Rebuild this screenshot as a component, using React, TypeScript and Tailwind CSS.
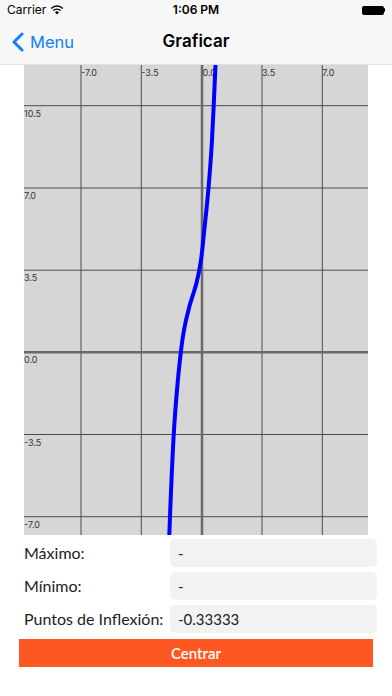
import React from 'react'

const W = 344
const H = 470
const OX = 24
const OY = 65

// grid positions in page pixels
const VLINES = [
  { x: 81, label: '-7.0' },
  { x: 141.3, label: '-3.5' },
  { x: 262, label: '3.5' },
  { x: 322.3, label: '7.0' },
]
const HLINES = [
  { y: 105.7, label: '10.5' },
  { y: 188, label: '7.0' },
  { y: 270.2, label: '3.5' },
  { y: 434.5, label: '-3.5' },
  { y: 516.7, label: '-7.0' },
]
const AXIS_X = 202
const AXIS_Y = 352.3

// sampled curve points (page pixels)
const CURVE: [number, number][] = [
  [217, 30], [215.5, 65], [212, 140], [208.5, 188], [204.5, 228], [201, 260],
  [196.5, 283], [189.5, 306], [184, 330], [180.5, 355], [177, 390], [174, 430],
  [171.5, 480], [169.3, 535], [168.5, 570],
]

function smoothPath(pts: [number, number][]) {
  const p = pts.map(([x, y]) => [x - OX, y - OY])
  let d = `M${p[0][0]},${p[0][1]}`
  for (let i = 0; i < p.length - 1; i++) {
    const p0 = p[i - 1] || p[i]
    const p1 = p[i]
    const p2 = p[i + 1]
    const p3 = p[i + 2] || p2
    const c1x = p1[0] + (p2[0] - p0[0]) / 6
    const c1y = p1[1] + (p2[1] - p0[1]) / 6
    const c2x = p2[0] - (p3[0] - p1[0]) / 6
    const c2y = p2[1] - (p3[1] - p1[1]) / 6
    d += ` C${c1x},${c1y} ${c2x},${c2y} ${p2[0]},${p2[1]}`
  }
  return d
}

function Graph() {
  return (
    <div className="ml-[24px] w-[344px] h-[470px] bg-[#d6d6d6] overflow-hidden">
      <svg width={W} height={H} viewBox={`0 0 ${W} ${H}`} className="block">
        {VLINES.map(v => (
          <line key={v.label} x1={v.x - OX} y1={0} x2={v.x - OX} y2={H} stroke="#4d4d4d" strokeWidth={1} />
        ))}
        {HLINES.map(h => (
          <line key={h.label} x1={0} y1={h.y - OY} x2={W} y2={h.y - OY} stroke="#4d4d4d" strokeWidth={1} />
        ))}
        <line x1={AXIS_X - OX} y1={0} x2={AXIS_X - OX} y2={H} stroke="#6a6a6a" strokeWidth={2.5} />
        <line x1={0} y1={AXIS_Y - OY} x2={W} y2={AXIS_Y - OY} stroke="#6a6a6a" strokeWidth={2.5} />

        <g fontFamily="Inter, 'Liberation Sans', sans-serif" fontSize={9} fill="#333">
          {VLINES.slice(0, 2).map(v => (
            <text key={v.label} x={v.x - OX} y={11}>{v.label}</text>
          ))}
          <text x={AXIS_X - OX + 0.5} y={11}>0.0</text>
          {VLINES.slice(2).map(v => (
            <text key={v.label} x={v.x - OX} y={11}>{v.label}</text>
          ))}
          {HLINES.slice(0, 3).map(h => (
            <text key={h.label} x={0} y={h.y - OY + 11}>{h.label}</text>
          ))}
          <text x={0} y={AXIS_Y - OY + 11}>0.0</text>
          {HLINES.slice(3).map(h => (
            <text key={h.label} x={0} y={h.y - OY + 11}>{h.label}</text>
          ))}
        </g>

        <path d={smoothPath(CURVE)} fill="none" stroke="#0000ff" strokeWidth={4} strokeLinecap="round" />
      </svg>
    </div>
  )
}

function StatusBar() {
  return (
    <div className="h-[20px] bg-[#f7f7f7] flex items-center justify-between px-[7px] text-[12px] text-black relative">
      <div className="flex items-center gap-[4px]">
        <span>Carrier</span>
        <svg width="14" height="10" viewBox="0 0 14 10">
          <path d="M7 9.5 L9 7.2 A3 3 0 0 0 5 7.2 Z" fill="#000" />
          <path d="M3.3 5.6 A5.3 5.3 0 0 1 10.7 5.6" fill="none" stroke="#000" strokeWidth="1.4" />
          <path d="M1.2 3.4 A8.3 8.3 0 0 1 12.8 3.4" fill="none" stroke="#000" strokeWidth="1.4" />
        </svg>
      </div>
      <span className="absolute left-1/2 -translate-x-1/2 font-semibold">1:06 PM</span>
      <div className="flex items-center">
        <div className="w-[22px] h-[9px] rounded-[2px] bg-black" />
        <div className="w-[1.5px] h-[4px] bg-black rounded-r-sm" />
      </div>
    </div>
  )
}

function NavBar() {
  return (
    <div className="h-[45px] bg-[#f7f7f7] border-b border-[#e2e2e2] relative flex items-center">
      <div className="flex items-center pl-[12px] text-[#147efb] text-[16.5px]">
        <svg width="12" height="20" viewBox="0 0 12 20" className="mr-[6px]">
          <path d="M10 2 L2 10 L10 18" fill="none" stroke="#147efb" strokeWidth="3" strokeLinecap="round" strokeLinejoin="round" />
        </svg>
        <span>Menu</span>
      </div>
      <span className="absolute left-1/2 -translate-x-1/2 font-semibold text-[17px] text-black">Graficar</span>
    </div>
  )
}

function Row({ label, value }: { label: string; value: string }) {
  return (
    <div className="flex items-center h-[28px]">
      <div className="w-[170px] shrink-0 pl-[24px] text-[16px] text-[#222] whitespace-nowrap">{label}</div>
      <div className="w-[207px] h-[28px] bg-[#f2f2f2] rounded-[5px] flex items-center pl-[8px] text-[15px] text-[#222]">
        {value}
      </div>
    </div>
  )
}

export default function App() {
  return (
    <div className="w-[392px] h-[696px] bg-white overflow-hidden" style={{ fontFamily: "Inter, 'Liberation Sans', sans-serif" }}>
      <StatusBar />
      <NavBar />
      <Graph />
      <div className="mt-[4px] flex flex-col gap-[5px]" style={{ fontFamily: "Lato, 'Open Sans', sans-serif" }}>
        <Row label="Máximo:" value="-" />
        <Row label="Mínimo:" value="-" />
        <Row label="Puntos de Inflexión:" value="-0.33333" />
      </div>
      <div className="mt-[6px] ml-[19px] w-[354px] h-[28px] bg-[#ff5722] flex items-center justify-center text-white text-[15px] font-semibold" style={{ fontFamily: "Lato, 'Open Sans', sans-serif" }}>
        Centrar
      </div>
    </div>
  )
}
